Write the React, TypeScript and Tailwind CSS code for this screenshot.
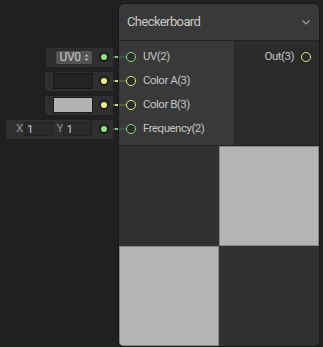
const FONT = { fontFamily: "Roboto, 'Noto Sans', sans-serif" };

type Port = "green" | "yellow";

const portColor: Record<Port, { ring: string; dot: string; dim: string; bright: string }> = {
    green: { ring: "border-[#84e184]", dot: "bg-[#8fe48f]", dim: "bg-[#41573d]", bright: "bg-[#7fc57f]" },
    yellow: { ring: "border-[#e8e883]", dot: "bg-[#f2f28a]", dim: "bg-[#5a5a3a]", bright: "bg-[#d8d878]" },
};

function Dot({ kind }: { kind: Port }) {
    return (
        <div className="w-[10px] h-[10px] rounded-full bg-[#1c1c1c] flex items-center justify-center">
            <div className={`w-[6px] h-[6px] rounded-full ${portColor[kind].dot}`} />
        </div>
    );
}

function Ring({ kind }: { kind: Port }) {
    return <div className={`w-[10px] h-[10px] rounded-full border-[1.5px] bg-[#2a2a2a] ${portColor[kind].ring}`} />;
}

function Wire({ kind }: { kind: Port }) {
    const c = portColor[kind];
    return (
        <div className="flex items-center w-[6px]">
            <div className={`h-[2px] w-[2px] ${c.dim}`} />
            <div className={`h-[2px] w-[3px] ${c.bright}`} />
            <div className={`h-[2px] w-[1px] ${c.dim}`} />
        </div>
    );
}

function Field({ kind, children, className }: { kind: Port; children: React.ReactNode; className: string }) {
    return (
        <div className="h-[24px] flex items-center justify-end">
            <div className={`h-[19px] bg-[#2f2f2f] flex items-center pr-[4px] ${className}`}>
                {children}
                <Dot kind={kind} />
            </div>
            <Wire kind={kind} />
        </div>
    );
}

function InputRow({ kind, label }: { kind: Port; label: string }) {
    return (
        <div className="h-[24px] flex items-center">
            <div className={`h-[2px] w-[7px] ${portColor[kind].dim}`} />
            <Ring kind={kind} />
            <span className="ml-[7px] text-[11.5px] tracking-[-0.5px] text-[#c2c2c2]">{label}</span>
        </div>
    );
}

export default function App() {
    return (
        <div className="w-[323px] h-[347px] bg-[#202020] flex pt-[4px] overflow-hidden" style={FONT}>
            <div className="w-[119px] pt-[41px] flex flex-col">
                <Field kind="green" className="w-[67px] pl-[9px]">
                    <div className="w-[39px] h-[15px] rounded-[3px] bg-[#545454] border border-[#2b2b2b] flex items-center justify-center gap-[3px] text-[12px] tracking-[-0.3px] text-[#c8c8c8] mr-[6px]">
                        <span>UV0</span>
                        <svg width="5" height="9" viewBox="0 0 5 9">
                            <path d="M0.5 3.5 L2.5 1 L4.5 3.5 Z M0.5 5.5 L2.5 8 L4.5 5.5 Z" fill="#b8b8b8" />
                        </svg>
                    </div>
                </Field>
                <Field kind="yellow" className="w-[68px] pl-[8px]">
                    <div className="w-[41px] h-[16px] bg-[#232323] border border-[#181818] mr-[6px]" />
                </Field>
                <Field kind="yellow" className="w-[68px] pl-[8px]">
                    <div className="w-[41px] h-[16px] bg-[#b3b3b3] border border-[#1c1c1c] mr-[6px]" />
                </Field>
                <Field kind="green" className="w-[107px] pl-[10px]">
                    <span className="text-[11.5px] text-[#8c8c8c] w-[8px]">X</span>
                    <div className="w-[29px] h-[14px] bg-[#2a2a2a] border border-[#222] text-[11.5px] text-[#c4c4c4] leading-[12px] pl-[2px]">1</div>
                    <span className="text-[11.5px] text-[#8c8c8c] w-[7px] ml-[4px]">Y</span>
                    <div className="w-[29px] h-[14px] bg-[#2a2a2a] border border-[#222] text-[11.5px] text-[#c4c4c4] leading-[12px] pl-[2px] mr-[7px]">1</div>
                </Field>
            </div>

            <div className="w-[200px] h-[342px] rounded-[5px] bg-[#393939] ring-1 ring-[#191919] flex flex-col overflow-hidden">
                <div className="h-[36px] flex items-center justify-between pl-[8px] pr-[9px] border-b border-[#232323] box-content">
                    <span className="text-[13px] tracking-[-0.6px] text-[#c8c8c8]">Checkerboard</span>
                    <svg width="8" height="5" viewBox="0 0 8 5">
                        <path d="M0.5 0.5 L4 4 L7.5 0.5" fill="none" stroke="#9a9a9a" strokeWidth="1.2" />
                    </svg>
                </div>
                <div className="h-[104px] flex border-b border-[#232323] box-content">
                    <div className="w-[116px] py-[4px] border-r border-[#262626] flex flex-col">
                        <InputRow kind="green" label="UV(2)" />
                        <InputRow kind="yellow" label="Color A(3)" />
                        <InputRow kind="yellow" label="Color B(3)" />
                        <InputRow kind="green" label="Frequency(2)" />
                    </div>
                    <div className="flex-1 bg-[#2b2b2b] py-[4px]">
                        <div className="h-[24px] flex items-center justify-end pr-[8px] gap-[7px]">
                            <span className="text-[11.5px] tracking-[-0.5px] text-[#c2c2c2]">Out(3)</span>
                            <Ring kind="yellow" />
                        </div>
                    </div>
                </div>
                <div className="flex-1 grid grid-cols-2 grid-rows-2 bg-[#313131]">
                    <div className="bg-[#313131]" />
                    <div className="bg-[#b4b4b4] border border-[#858585]" />
                    <div className="bg-[#b4b4b4] border border-[#858585]" />
                    <div className="bg-[#313131]" />
                </div>
            </div>
        </div>
    );
}
